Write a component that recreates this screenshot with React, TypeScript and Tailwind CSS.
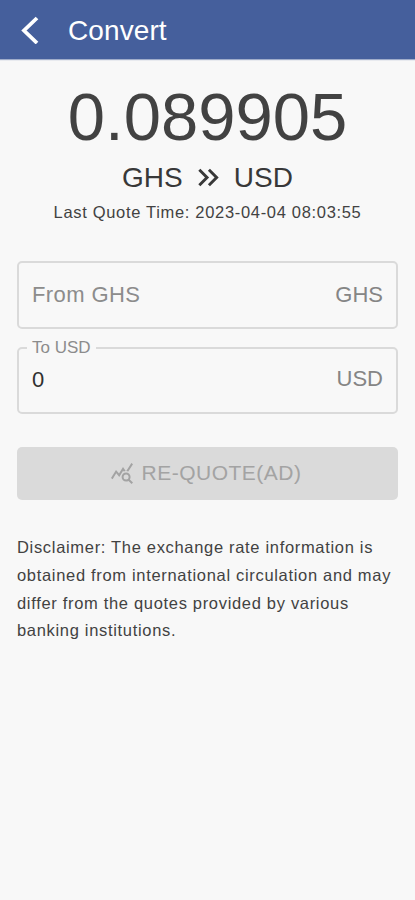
import React, { useState } from "react";
import { MdKeyboardDoubleArrowRight, MdQueryStats } from "react-icons/md";

const quote = {
  from: "GHS",
  to: "USD",
  rate: "0.089905",
  time: "2023-04-04 08:03:55",
};

const disclaimer = [
  "Disclaimer: The exchange rate information is",
  "obtained from international circulation and may",
  "differ from the quotes provided by various",
  "banking institutions.",
];

const Header = () => (
  <header className="flex h-[59px] items-center bg-[#455f9c] pl-[20px] text-white shadow-[0_1px_1px_rgba(69,95,156,0.5)]">
    <button aria-label="Back" className="flex w-[48px] items-center">
      <svg
        className="h-[28px] w-[20px]"
        viewBox="0 0 20 28"
        fill="none"
        stroke="currentColor"
        strokeWidth="3.8"
      >
        <path d="M17 2 4 14.5 17 27" />
      </svg>
    </button>
    <h1 className="pt-[2px] text-[28px] leading-[32px] tracking-[0.1px]">Convert</h1>
  </header>
);

const App = () => {
  const [amount, setAmount] = useState("");
  const result = Number(amount) * Number(quote.rate);

  return (
    <div className="min-h-screen bg-[#f8f8f8] font-['Liberation_Sans',Arial,sans-serif] text-[#424242]">
      <Header />

      <main className="px-[17px]">
        {/* Current rate */}
        <section className="flex flex-col items-center pt-[20px]">
          <div className="text-[67px] leading-[76px]">{quote.rate}</div>
          <div className="mt-[4px] flex h-[36px] items-center pt-px text-[28px] text-[#383838]">
            <span>{quote.from}</span>
            <MdKeyboardDoubleArrowRight className="mx-[8px] h-[35px] w-[35px]" />
            <span>{quote.to}</span>
          </div>
          <p className="mt-[6px] text-[16.5px] leading-[22px] tracking-[0.68px]">
            Last Quote Time: {quote.time}
          </p>
        </section>

        {/* Amounts */}
        <section className="mt-[38px] flex flex-col gap-[10px] text-[#858585]">
          <div className="flex h-[68px] items-center rounded-[5px] border-2 border-[#dadada] px-[13px] pb-[2px] text-[22px]">
            <input
              value={amount}
              onChange={(e) => setAmount(e.target.value)}
              placeholder="From GHS"
              className="min-w-0 flex-1 bg-transparent tracking-[0.4px] outline-none placeholder:text-[#8c8c8c]"
            />
            <span>{quote.from}</span>
          </div>

          <fieldset className="h-[75px] rounded-[5px] border-2 border-[#dadada] px-[8px]">
            <legend className="px-[5px] text-[17px] leading-[18px] text-[#8c8c8c]">
              To USD
            </legend>
            <div className="flex h-[44px] items-center px-[5px] text-[22px]">
              <span className="flex-1 text-[#303030]">{result}</span>
              <span className="relative -top-px">{quote.to}</span>
            </div>
          </fieldset>
        </section>

        <button
          disabled
          className="mt-[33px] flex h-[53px] w-full items-center justify-center gap-[8px] rounded-[5px] bg-[#dadada] pr-[4px] pb-[2px] text-[21px] tracking-[0.5px] text-[#a3a3a3]"
        >
          <MdQueryStats className="h-[24px] w-[24px]" />
          RE-QUOTE(AD)
        </button>

        <p className="mt-[34px] text-[16.5px] leading-[27.8px] tracking-[0.68px]">
          {disclaimer.map((line) => (
            <span key={line} className="block whitespace-nowrap">
              {line}
            </span>
          ))}
        </p>
      </main>
    </div>
  );
};

export default App;
